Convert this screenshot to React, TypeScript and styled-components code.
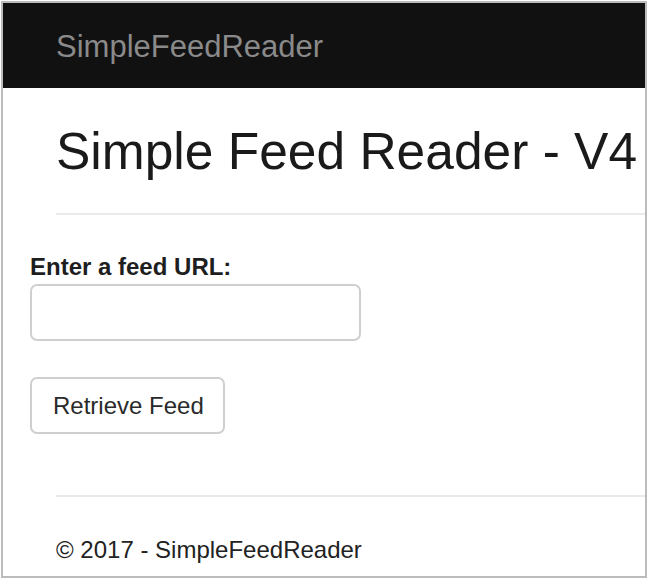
import styled, { createGlobalStyle } from "styled-components";

const GlobalStyle = createGlobalStyle`
  body {
    margin: 0;
    background: #fff;
    font-family: "Liberation Sans", Arial, sans-serif;
    color: #222;
  }
`;

const Frame = styled.div`
  margin: 1px;
  width: 642px;
  height: 573px;
  border: 2px solid #bcbcbc;
  overflow: hidden;
  background: #fff;
`;

const Navbar = styled.nav`
  height: 85px;
  background: #111;
  display: flex;
  align-items: center;
  padding-left: 53px;
`;

const Brand = styled.a`
  font-size: 31px;
  color: #8a8a8a;
  text-decoration: none;
  line-height: 1;
  margin-top: 2px;
`;

const Body = styled.div`
  padding-left: 53px;
`;

const Title = styled.h2`
  margin: 35px 0 0;
  font-size: 51.5px;
  font-weight: 400;
  line-height: 56px;
  color: #1a1a1a;
  white-space: nowrap;
`;

const Rule = styled.hr<{ $top: number }>`
  margin: ${(p) => p.$top}px 0 0;
  height: 0;
  border: 0;
  border-top: 2px solid #eaeaea;
`;

const Form = styled.form`
  padding-left: 27px;
  display: flex;
  flex-direction: column;
  align-items: flex-start;
`;

const Label = styled.label`
  display: block;
  margin: 37px 0 3px;
  font-size: 24px;
  font-weight: 700;
  line-height: 29px;
  color: #1e1e1e;
`;

const UrlInput = styled.input`
  box-sizing: border-box;
  width: 331px;
  height: 57px;
  border: 2px solid #cfcfcf;
  border-radius: 7px;
  padding: 0 18px;
  font-size: 24px;
  font-family: inherit;
`;

const Button = styled.button`
  box-sizing: border-box;
  margin-top: 36px;
  width: 195px;
  height: 57px;
  border: 2px solid #cfcfcf;
  border-radius: 7px;
  background: #fff;
  padding: 0 0 0 21px;
  text-align: left;
  font-family: inherit;
  font-size: 24px;
  color: #2a2a2a;
`;

const Footer = styled.footer`
  margin-top: 38px;
  font-size: 24px;
  line-height: 29px;
  color: #222;
`;

export default function App() {
  return (
    <>
      <GlobalStyle />
      <Frame>
        <Navbar>
          <Brand href="#">SimpleFeedReader</Brand>
        </Navbar>
        <Body>
          <Title>Simple Feed Reader - V4</Title>
          <Rule $top={34} />
        </Body>
        <Form onSubmit={(e) => e.preventDefault()}>
          <Label htmlFor="feed-url">Enter a feed URL:</Label>
          <UrlInput id="feed-url" type="text" />
          <Button type="submit">Retrieve Feed</Button>
        </Form>
        <Body>
          <Rule $top={61} />
          <Footer>© 2017 - SimpleFeedReader</Footer>
        </Body>
      </Frame>
    </>
  );
}
